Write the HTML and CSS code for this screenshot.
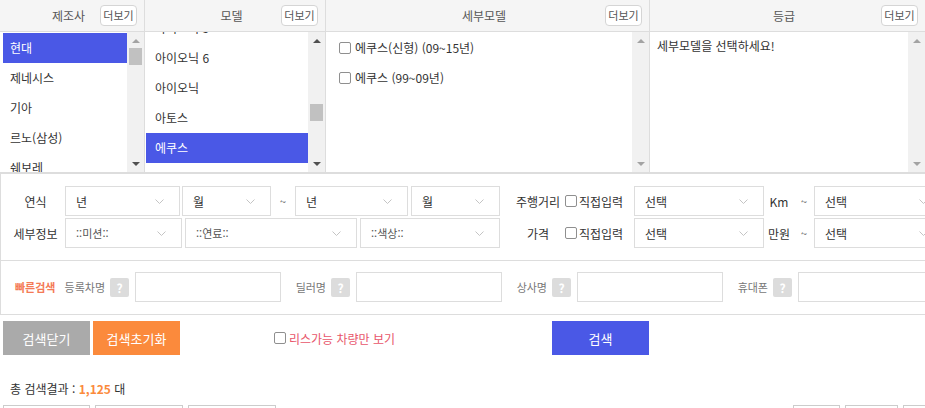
FILE: index.html
```html
<!DOCTYPE html>
<html lang="ko">
<head>
  <meta charset="UTF-8" />
  <meta name="viewport" content="width=device-width, initial-scale=1.0"/>
  <title>차량검색</title>
  <link rel="stylesheet" href="styles.css">
</head>
<body>
<div class="wrap">

  <!-- 제조사 / 모델 / 세부모델 / 등급 -->
  <div class="picker">
    <div class="col c1">
      <div class="head"><span class="title">제조사</span><button class="more">더보기</button></div>
      <div class="body">
        <ul class="list pad3">
          <li class="on">현대</li>
          <li>제네시스</li>
          <li>기아</li>
          <li>르노(삼성)</li>
          <li>쉐보레</li>
          <li>쌍용</li>
        </ul>
        <div class="sbar">
          <div class="arrow up dim"></div>
          <div class="track"><div class="thumb t1"></div></div>
          <div class="arrow down"></div>
        </div>
      </div>
    </div>
    <div class="col c2">
      <div class="head"><span class="title">모델</span><button class="more">더보기</button></div>
      <div class="body">
        <ul class="list pad1 scrolled">
          <li>아이오닉 5</li>
          <li>아이오닉 6</li>
          <li>아이오닉</li>
          <li>아토스</li>
          <li class="on">에쿠스</li>
          <li>엑센트</li>
        </ul>
        <div class="sbar">
          <div class="arrow up"></div>
          <div class="track"><div class="thumb t2"></div></div>
          <div class="arrow down"></div>
        </div>
      </div>
    </div>
    <div class="col c3">
      <div class="head"><span class="title">세부모델</span><button class="more">더보기</button></div>
      <div class="body">
        <ul class="checks">
          <li><label><input type="checkbox" class="cb"> 에쿠스(신형) (09~15년)</label></li>
          <li><label><input type="checkbox" class="cb"> 에쿠스 (99~09년)</label></li>
        </ul>
        <div class="sbar">
          <div class="arrow up dim"></div>
          <div class="track"></div>
          <div class="arrow down dim"></div>
        </div>
      </div>
    </div>
    <div class="col c4">
      <div class="head"><span class="title">등급</span><button class="more">더보기</button></div>
      <div class="body">
        <p class="notice">세부모델을 선택하세요!</p>
        <div class="sbar">
          <div class="arrow up dim"></div>
          <div class="track"></div>
          <div class="arrow down dim"></div>
        </div>
      </div>
    </div>
  </div>

  <!-- 상세 조건 -->
  <div class="filters">
    <div class="frow">
      <span class="flabel">연식</span>
      <div class="sel w115">년<svg width="9" height="5" viewBox="0 0 9 5"><polyline points="0.5,0.5 4.5,4.5 8.5,0.5"/></svg></div>
      <div class="sel w89 ml2">월<svg width="9" height="5" viewBox="0 0 9 5"><polyline points="0.5,0.5 4.5,4.5 8.5,0.5"/></svg></div>
      <span class="tilde w24">~</span>
      <div class="sel w113">년<svg width="9" height="5" viewBox="0 0 9 5"><polyline points="0.5,0.5 4.5,4.5 8.5,0.5"/></svg></div>
      <div class="sel w89 ml3">월<svg width="9" height="5" viewBox="0 0 9 5"><polyline points="0.5,0.5 4.5,4.5 8.5,0.5"/></svg></div>

      <span class="rlabel">주행거리</span>
      <label class="direct"><input type="checkbox" class="cb">직접입력</label>
      <div class="sel w130">선택<svg width="9" height="5" viewBox="0 0 9 5"><polyline points="0.5,0.5 4.5,4.5 8.5,0.5"/></svg></div>
      <span class="unit">Km</span>
      <span class="tilde w20">~</span>
      <div class="sel w130">선택<svg width="9" height="5" viewBox="0 0 9 5"><polyline points="0.5,0.5 4.5,4.5 8.5,0.5"/></svg></div>
    </div>
    <div class="frow">
      <span class="flabel">세부정보</span>
      <div class="sel w117 small">::미션::<svg width="9" height="5" viewBox="0 0 9 5"><polyline points="0.5,0.5 4.5,4.5 8.5,0.5"/></svg></div>
      <div class="sel w172 ml3 small">::연료::<svg width="9" height="5" viewBox="0 0 9 5"><polyline points="0.5,0.5 4.5,4.5 8.5,0.5"/></svg></div>
      <div class="sel w140 ml3 small">::색상::<svg width="9" height="5" viewBox="0 0 9 5"><polyline points="0.5,0.5 4.5,4.5 8.5,0.5"/></svg></div>

      <span class="rlabel">가격</span>
      <label class="direct"><input type="checkbox" class="cb">직접입력</label>
      <div class="sel w130">선택<svg width="9" height="5" viewBox="0 0 9 5"><polyline points="0.5,0.5 4.5,4.5 8.5,0.5"/></svg></div>
      <span class="unit">만원</span>
      <span class="tilde w20">~</span>
      <div class="sel w130">선택<svg width="9" height="5" viewBox="0 0 9 5"><polyline points="0.5,0.5 4.5,4.5 8.5,0.5"/></svg></div>
    </div>
  </div>

  <!-- 빠른검색 -->
  <div class="quick">
    <span class="qtitle">빠른검색</span>
    <div class="qgroup"><span class="qlabel">등록차명</span><span class="help">?</span><input class="qinput"></div>
    <div class="qgroup"><span class="qlabel">딜러명</span><span class="help">?</span><input class="qinput"></div>
    <div class="qgroup"><span class="qlabel">상사명</span><span class="help">?</span><input class="qinput"></div>
    <div class="qgroup"><span class="qlabel">휴대폰</span><span class="help">?</span><input class="qinput"></div>
  </div>

  <div class="actions">
    <button class="btn gray">검색닫기</button>
    <button class="btn orange">검색초기화</button>
    <div class="lease"><label><input type="checkbox" class="cb">리스가능 차량만 보기</label></div>
    <button class="btn blue">검색</button>
  </div>

  <p class="result">총 검색결과 : <b>1,125</b> 대</p>

  <div class="tabs">
    <span class="tab w87"></span>
    <span class="tab w88"></span>
    <span class="tab w88"></span>
    <span class="tabgap"></span>
    <span class="tab w47"></span>
    <span class="tab w53"></span>
    <span class="tab w47"></span>
  </div>

</div>
</body>
</html>
```

FILE: styles.css
```css
html, body {
  margin: 0;
  overflow: hidden;
}
body {
  font-family: "Noto Sans CJK KR", "Noto Sans", sans-serif;
  font-size: 12px;
  color: #333;
  background: #fff;
}
.wrap {
  width: 1000px;
}
ul, p {
  margin: 0;
  padding: 0;
  list-style: none;
}

/* picker */
.picker {
  display: grid;
  grid-template-columns: 145px 181px 324px 275px;
  border-bottom: 2px solid #ddd;
}
.col {
  border-right: 1px solid #ddd;
  display: flex;
  flex-direction: column;
}
.c4 {
  border-right: none;
}
.head {
  height: 31px;
  background: #f5f5f5;
  border-bottom: 1px solid #ddd;
  display: grid;
  grid-template-columns: 1fr auto 1fr;
  align-items: center;
  padding-right: 7px;
}
.title {
  grid-column: 2;
  color: #555;
  font-size: 12px;
}
.more {
  grid-column: 3;
  justify-self: end;
  width: 37px;
  height: 21px;
  padding: 0;
  border: 1px solid #d5d5d5;
  border-radius: 4px;
  background: #fff;
  color: #555;
  font-family: inherit;
  font-size: 11px;
  line-height: 19px;
}
.body {
  height: 140px;
  display: flex;
  overflow: hidden;
}
.list {
  flex: 1;
  overflow: hidden;
  padding-top: 1px;
}
.list.pad3 { padding-left: 3px; }
.list.pad1 { padding-left: 1px; }
.list li {
  height: 30px;
  line-height: 30px;
  padding-left: 7px;
  font-size: 12px;
  white-space: nowrap;
}
.list.pad1 li {
  padding-left: 9px;
}
.list.scrolled li:first-child {
  margin-top: -20px;
}
.list li.on {
  background: #4a58e6;
  color: #fff;
}

.sbar {
  width: 17px;
  background: #f1f1f1;
  display: flex;
  flex-direction: column;
}
.arrow {
  height: 17px;
  display: flex;
  align-items: center;
  justify-content: center;
}
.arrow::before {
  content: "";
  border-left: 4px solid transparent;
  border-right: 4px solid transparent;
}
.arrow.up::before { border-bottom: 4px solid #505050; }
.arrow.down::before { border-top: 4px solid #505050; }
.arrow.up.dim::before { border-bottom-color: #a3a3a3; }
.arrow.down.dim::before { border-top-color: #a3a3a3; }
.track {
  flex: 1;
}
.thumb {
  height: 17px;
  margin: 0 2px;
  background: #c1c1c1;
}
.t1 { margin-top: -1px; }
.t2 { margin-top: 55px; }

.checks {
  flex: 1;
  padding: 8px 0 0 13px;
}
.checks li {
  height: 30px;
  line-height: 16px;
}
.checks label {
  display: flex;
  align-items: center;
  gap: 4px;
}
.cb {
  appearance: none;
  -webkit-appearance: none;
  width: 12px;
  height: 12px;
  margin: 0;
  border: 1px solid #8f8f8f;
  border-radius: 2px;
  background: #fff;
  flex: none;
}
.notice {
  flex: 1;
  padding: 6px 0 0 7px;
  line-height: 16px;
}

/* filters */
.filters {
  border-left: 1px solid #ddd;
  border-bottom: 1px solid #ddd;
  padding: 12px 0;
  display: flex;
  flex-direction: column;
  gap: 2px;
}
.frow {
  display: flex;
  align-items: center;
  height: 30px;
}
.flabel {
  width: 59px;
  margin-left: 5px;
  text-align: center;
  color: #333;
}
.sel {
  height: 30px;
  box-sizing: border-box;
  border: 1px solid #ddd;
  display: flex;
  align-items: center;
  justify-content: space-between;
  padding: 0 15px 0 10px;
  color: #333;
  flex: none;
}
.sel.small {
  font-size: 11px;
  color: #555;
}
.sel svg polyline {
  fill: none;
  stroke: #c4c4c4;
  stroke-width: 1;
}
.w113 { width: 113px; }
.w115 { width: 115px; }
.w117 { width: 117px; }
.w89 { width: 89px; }
.w130 { width: 130px; }
.w140 { width: 140px; }
.w172 { width: 172px; }
.ml2 { margin-left: 2px; }
.ml3 { margin-left: 3px; }
.tilde {
  text-align: center;
  color: #555;
  font-size: 11px;
}
.w24 { width: 24px; }
.w20 { width: 20px; }
.rlabel {
  width: 54px;
  margin-left: 11px;
  text-align: center;
  color: #333;
  white-space: nowrap;
}
.direct {
  display: flex;
  align-items: center;
  gap: 2px;
  width: 69px;
  white-space: nowrap;
}
.unit {
  width: 30px;
  text-align: center;
  color: #333;
  font-weight: normal;
}

/* quick search */
.quick {
  border-left: 1px solid #ddd;
  border-bottom: 1px solid #ddd;
  padding: 11px 0 12px;
  display: flex;
  align-items: center;
}
.qtitle {
  margin-left: 14px;
  width: 46px;
  color: #f47a56;
  font-size: 11px;
  font-weight: bold;
  white-space: nowrap;
}
.qgroup {
  display: flex;
  align-items: center;
  width: 221px;
}
.qlabel {
  width: 44px;
  margin-right: 5px;
  color: #777;
  font-size: 11px;
  display: flex;
  justify-content: flex-end;
  white-space: nowrap;
}
.help {
  width: 19px;
  height: 19px;
  margin-right: 6px;
  border-radius: 2px;
  background: #dcdcdc;
  color: #fff;
  font-weight: bold;
  font-size: 12px;
  text-align: center;
  line-height: 19px;
}
.qinput {
  width: 146px;
  height: 30px;
  box-sizing: border-box;
  border: 1px solid #ddd;
  margin: 0;
  padding: 0 8px;
}

/* buttons */
.actions {
  display: flex;
  align-items: center;
  margin-top: 6px;
  padding-left: 3px;
}
.btn {
  height: 34px;
  width: 87px;
  border: none;
  padding: 0;
  color: #fff;
  font-family: inherit;
  font-size: 13px;
}
.gray { background: #aaa; }
.orange { background: #fb8a3c; margin-left: 3px; }
.blue { background: #4a58e6; width: 97px; }
.lease {
  width: 372px;
  padding-left: 94px;
  box-sizing: border-box;
}
.lease label {
  display: flex;
  align-items: center;
  gap: 3px;
  color: #e8566b;
}

.result {
  margin-top: 24px;
  padding-left: 10px;
  line-height: 20px;
}
.result b {
  color: #fb8a3c;
}

.tabs {
  display: flex;
  margin-top: 6px;
  padding-left: 3px;
  gap: 5px;
}
.tab {
  height: 30px;
  border: 1px solid #ccc;
  box-sizing: border-box;
  flex: none;
}
.w87 { width: 87px; }
.w88 { width: 88px; }
.w47 { width: 47px; }
.w53 { width: 53px; }
.tabgap { width: 507px; }
```
